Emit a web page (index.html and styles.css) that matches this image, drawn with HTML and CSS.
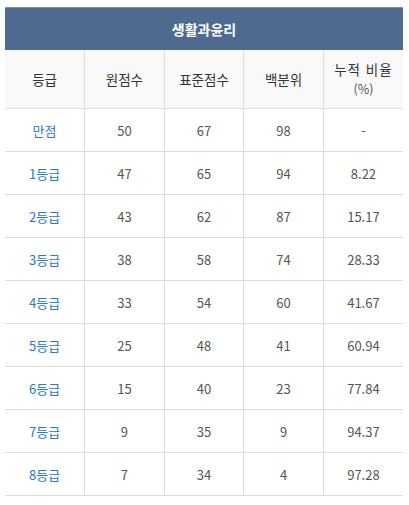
FILE: index.html
```html
<!DOCTYPE html>
<html lang="ko">
<head>
<meta charset="utf-8">
<link rel="stylesheet" href="styles.css">
</head>
<body>
<div class="wrap">
<table class="grade">
  <thead>
    <tr class="title-row"><th colspan="5">생활과윤리</th></tr>
    <tr class="head-row">
      <th>등급</th><th>원점수</th><th>표준점수</th><th>백분위</th><th><span class="cum">누적 비율</span><span class="sub">(%)</span></th>
    </tr>
  </thead>
  <tbody>
    <tr><td class="g">만점</td><td>50</td><td>67</td><td>98</td><td>-</td></tr>
    <tr><td class="g">1등급</td><td>47</td><td>65</td><td>94</td><td>8.22</td></tr>
    <tr><td class="g">2등급</td><td>43</td><td>62</td><td>87</td><td>15.17</td></tr>
    <tr><td class="g">3등급</td><td>38</td><td>58</td><td>74</td><td>28.33</td></tr>
    <tr><td class="g">4등급</td><td>33</td><td>54</td><td>60</td><td>41.67</td></tr>
    <tr><td class="g">5등급</td><td>25</td><td>48</td><td>41</td><td>60.94</td></tr>
    <tr><td class="g">6등급</td><td>15</td><td>40</td><td>23</td><td>77.84</td></tr>
    <tr><td class="g">7등급</td><td>9</td><td>35</td><td>9</td><td>94.37</td></tr>
    <tr><td class="g">8등급</td><td>7</td><td>34</td><td>4</td><td>97.28</td></tr>
  </tbody>
</table>
</div>
</body>
</html>
```
FILE: styles.css
```css
html, body {
  margin: 0;
  padding: 0;
  background: #fff;
}
.wrap {
  padding: 7px 6px 0 5px;
}
.grade {
  width: 398px;
  border-collapse: collapse;
  table-layout: fixed;
  font-family: "Noto Sans CJK KR", "Noto Sans", sans-serif;
  font-size: 13px;
  color: #555;
}
.grade th, .grade td {
  padding: 0;
  text-align: center;
  vertical-align: middle;
  font-weight: normal;
}
.title-row th {
  background: #4e6a8e;
  color: #fff;
  font-weight: bold;
  font-size: 14px;
  height: 42px;
  border-top: 1px solid #8a8a8a;
}
.head-row th {
  background: #f9f9f9;
  color: #333;
  font-size: 13.5px;
  height: 58px;
  line-height: 20px;
  border-bottom: 1px solid #dcdcdc;
}
.head-row th + th,
.grade td + td {
  border-left: 1px solid #dcdcdc;
}
.cum {
  display: block;
  letter-spacing: 1px;
}
.sub {
  display: block;
  font-size: 12.5px;
  color: #555;
}
.grade td {
  height: 42px;
  border-bottom: 1px solid #dcdcdc;
}
.grade td.g {
  color: #2a78cc;
}
```
